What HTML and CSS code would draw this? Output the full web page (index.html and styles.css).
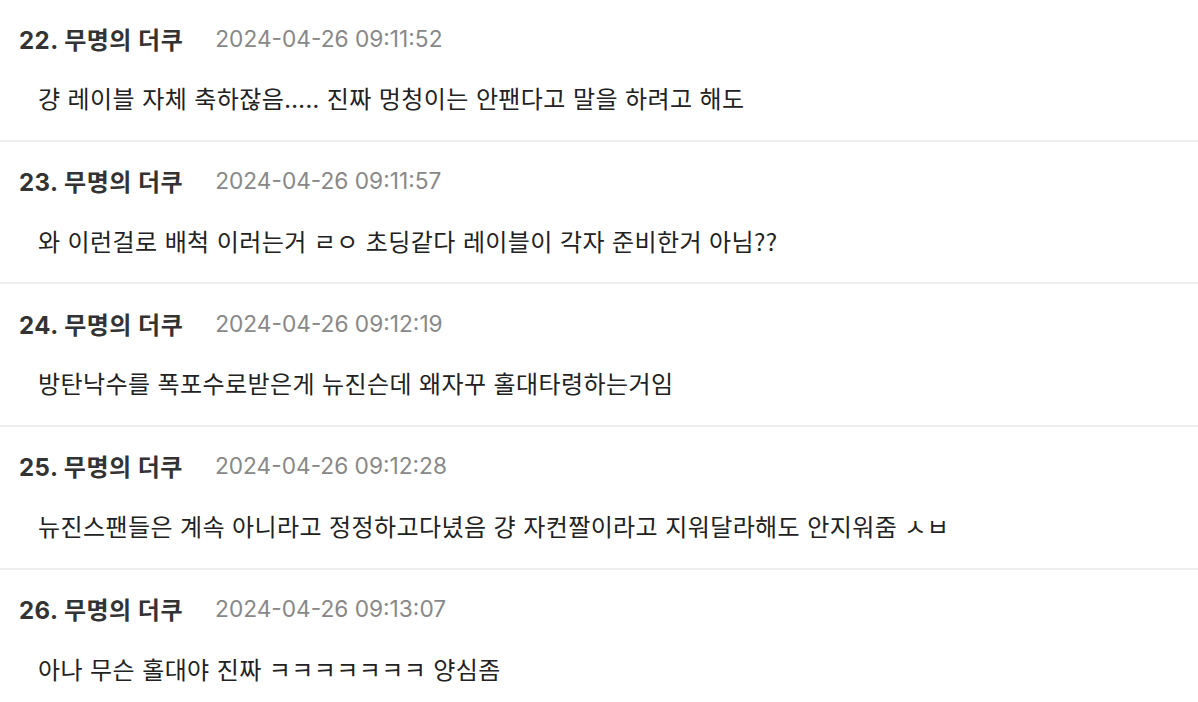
FILE: index.html
```html
<!DOCTYPE html>
<html lang="ko">
<head>
<meta charset="utf-8">
<link rel="stylesheet" href="styles.css">
</head>
<body>
<div class="list">
  <div class="item">
    <div class="head"><span class="name">22. 무명의 더쿠</span><span class="date">2024-04-26 09:11:52</span></div>
    <div class="body">걍 레이블 자체 축하잖음..... 진짜 멍청이는 안팬다고 말을 하려고 해도</div>
  </div>
  <div class="item">
    <div class="head"><span class="name">23. 무명의 더쿠</span><span class="date">2024-04-26 09:11:57</span></div>
    <div class="body">와 이런걸로 배척 이러는거 ㄹㅇ 초딩같다 레이블이 각자 준비한거 아님??</div>
  </div>
  <div class="item">
    <div class="head"><span class="name">24. 무명의 더쿠</span><span class="date">2024-04-26 09:12:19</span></div>
    <div class="body">방탄낙수를 폭포수로받은게 뉴진슨데 왜자꾸 홀대타령하는거임</div>
  </div>
  <div class="item">
    <div class="head"><span class="name">25. 무명의 더쿠</span><span class="date">2024-04-26 09:12:28</span></div>
    <div class="body">뉴진스팬들은 계속 아니라고 정정하고다녔음 걍 자컨짤이라고 지워달라해도 안지워줌 ㅅㅂ</div>
  </div>
  <div class="item">
    <div class="head"><span class="name">26. 무명의 더쿠</span><span class="date">2024-04-26 09:13:07</span></div>
    <div class="body">아나 무슨 홀대야 진짜 ㅋㅋㅋㅋㅋㅋㅋ 양심좀</div>
  </div>
</div>
</body>
</html>
```
FILE: styles.css
```css
html, body {
  margin: 0;
  padding: 0;
  background: #ffffff;
}
.list {
  display: flex;
  flex-direction: column;
  margin-top: -1px;
}
.item {
  padding: 21px 19px 23.67px;
  border-bottom: 2px solid #eeeeee;
}
.head {
  display: flex;
  align-items: center;
  gap: 32px;
  height: 36px;
  font-family: Inter, "Noto Sans CJK KR", sans-serif;
}
.name {
  font-weight: 700;
  font-size: 24px;
  letter-spacing: 0.5px;
  color: #333333;
}
.date {
  font-size: 22.7px;
  color: #888888;
}
.body {
  margin-top: 24px;
  padding-left: 19px;
  height: 36px;
  line-height: 36px;
  font-family: "Noto Sans CJK KR", sans-serif;
  font-size: 24px;
  letter-spacing: 0.4px;
  color: #222222;
}
```
